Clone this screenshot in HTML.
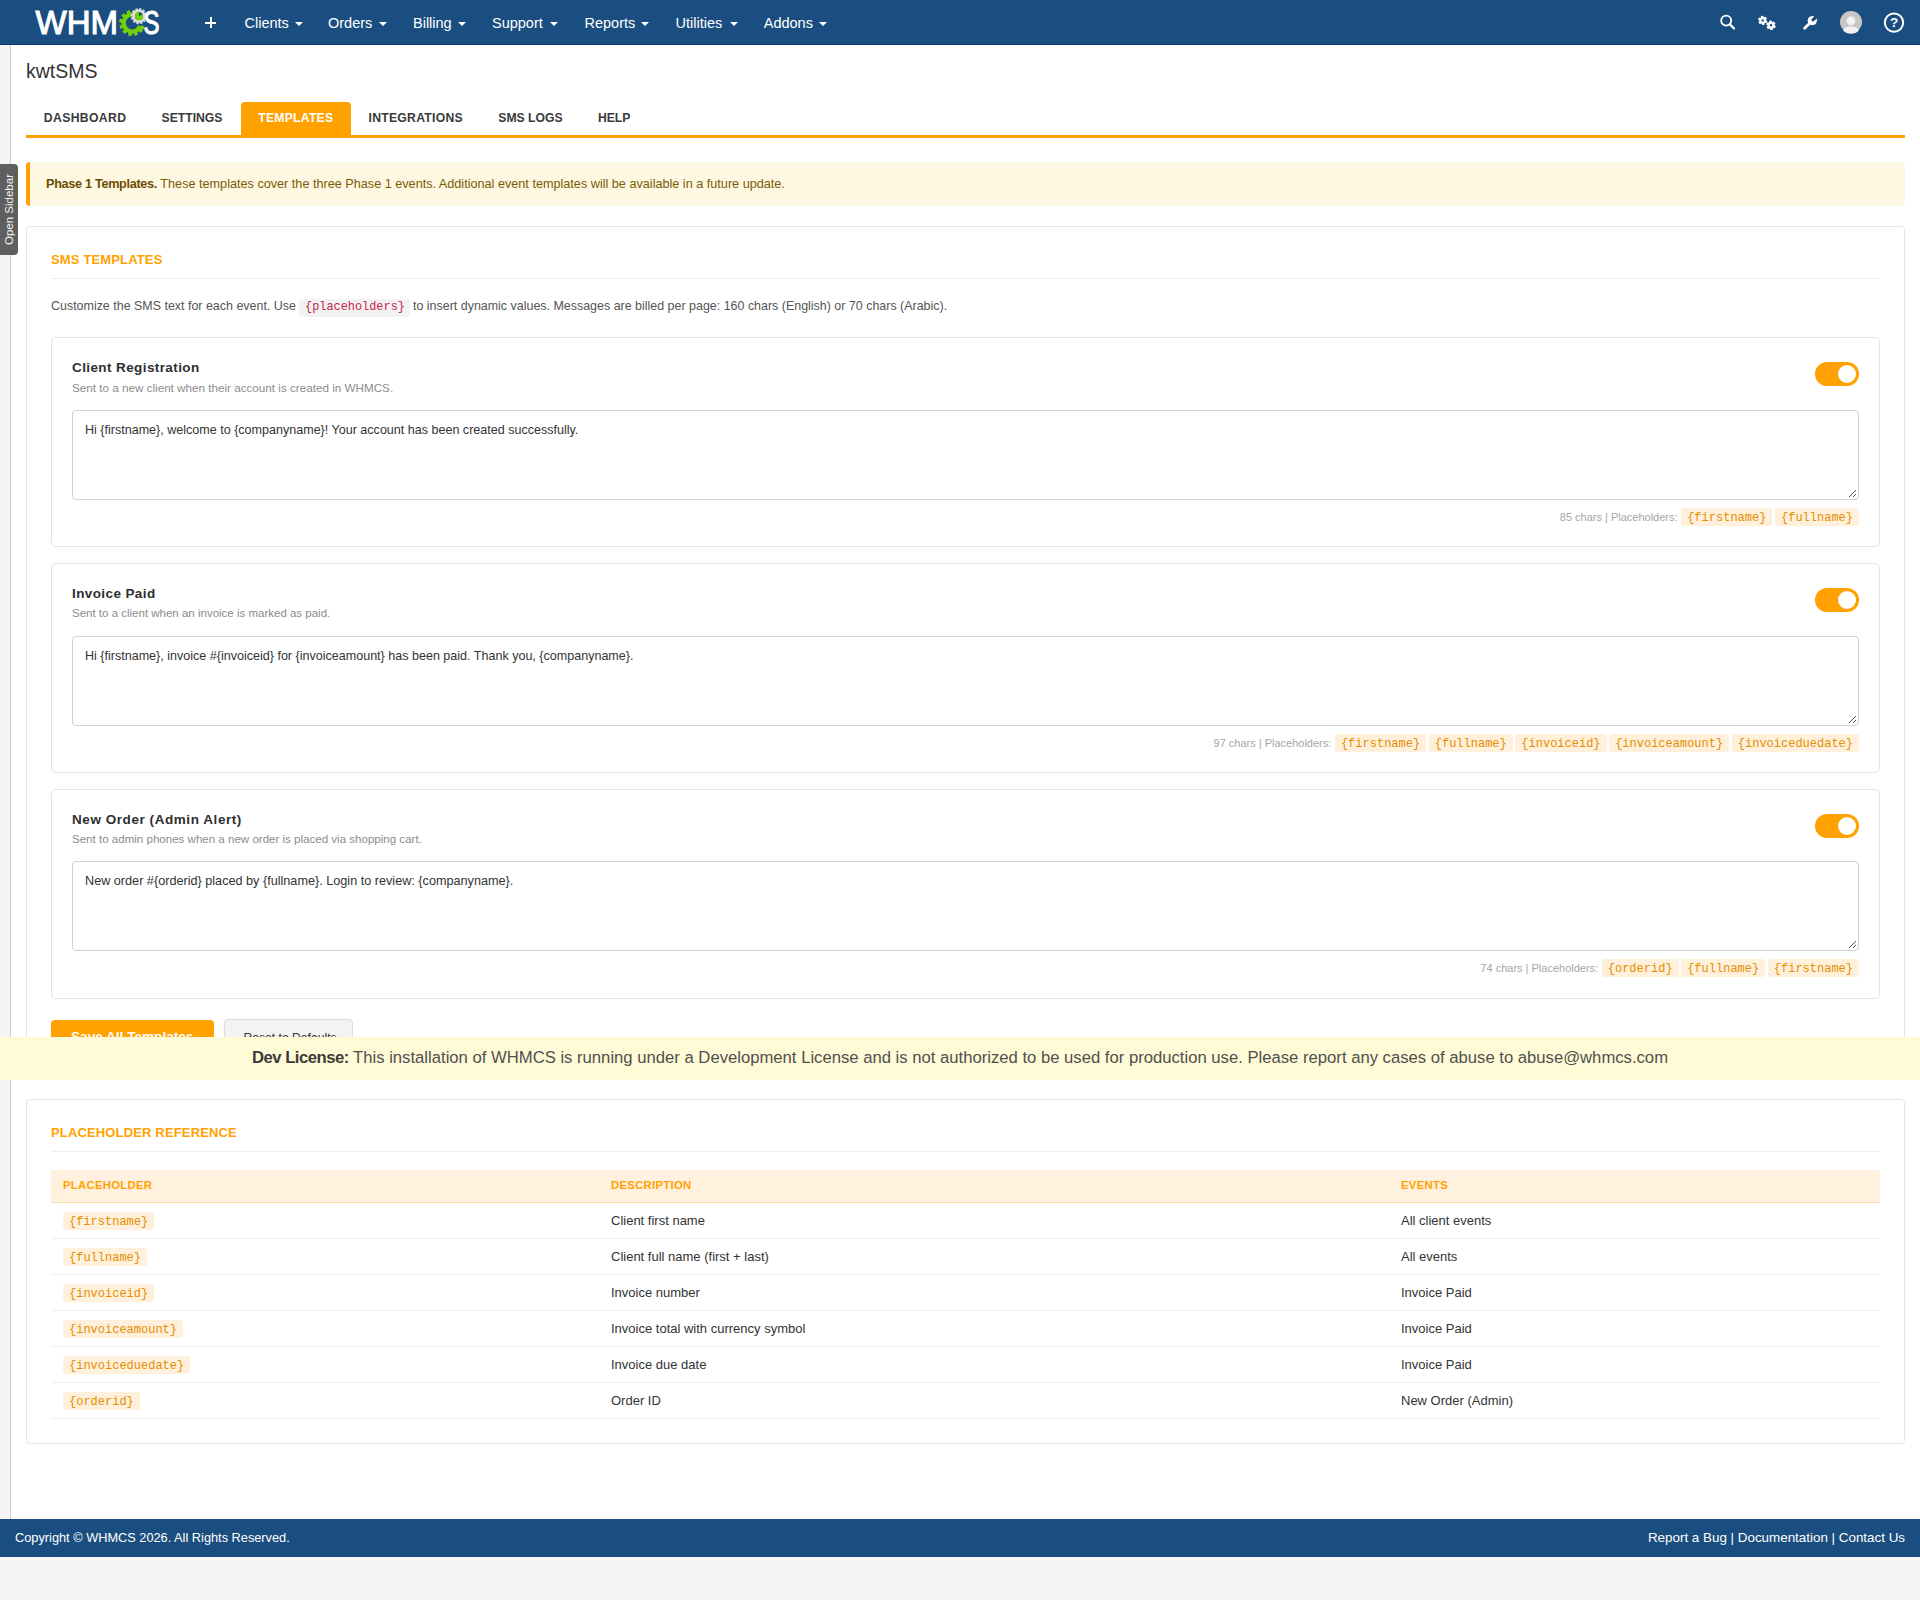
<!DOCTYPE html><html><head><meta charset="utf-8"><title>kwtSMS - WHMCS</title><style>
*{box-sizing:border-box;margin:0;padding:0}
html,body{width:1920px;height:1600px;overflow:hidden}
body{background:#f5f5f5;font-family:'Liberation Sans', sans-serif;position:relative}
.t{position:absolute;line-height:1;white-space:nowrap}
.r{position:absolute}
.chip{display:inline-block;font-family:'Liberation Mono', monospace;font-size:12px;line-height:20px;height:18px;padding:0 6px;background:#fff0db;color:#e58e00;border-radius:3px;vertical-align:top}
.crow{position:absolute;display:flex;justify-content:flex-end;align-items:flex-start;gap:2.6px;white-space:nowrap}
.crow .lab{font-size:11px;color:#a6a6a6;line-height:18px;margin-right:1px}
</style></head><body>
<div class="r" style="left:10px;top:45px;width:1910px;height:1474px;background:#fff;border-left:1px solid #cfcfcf"></div>
<div class="r" style="left:0px;top:0px;width:1920px;height:45px;background:#1b4e80;border-bottom:1px solid #0d3b6f"></div>
<svg class="r" style="left:0;top:0" width="200" height="45" viewBox="0 0 200 45">
<text x="35.5" y="34.4" font-family="Liberation Sans" font-size="33.5" fill="#fff" stroke="#fff" stroke-width="1.1" textLength="82.5" lengthAdjust="spacingAndGlyphs">WHM</text>
<path d="M142.60,23.00 L145.27,23.82 L144.62,27.18 L141.83,26.93 L141.21,28.20 L143.11,30.25 L140.86,32.83 L138.57,31.22 L137.40,32.01 L138.02,34.73 L134.79,35.84 L133.61,33.30 L132.20,33.40 L131.38,36.07 L128.02,35.42 L128.27,32.63 L127.00,32.01 L124.95,33.91 L122.37,31.66 L123.98,29.37 L123.19,28.20 L120.47,28.82 L119.36,25.59 L121.90,24.41 L121.80,23.00 L119.13,22.18 L119.78,18.82 L122.57,19.07 L123.19,17.80 L121.29,15.75 L123.54,13.17 L125.83,14.78 L127.00,13.99 L126.38,11.27 L129.61,10.16 L130.79,12.70 L132.20,12.60 L133.02,9.93 L136.38,10.58 L136.13,13.37 L137.40,13.99 L139.45,12.09 L142.03,14.34 L140.42,16.63 L141.21,17.80 L143.93,17.18 L145.04,20.41 L142.50,21.59Z M138.60,23.00 A6.4,6.4 0 1,0 125.80,23.00 A6.4,6.4 0 1,0 138.60,23.00Z" fill="#72cf0a" fill-rule="evenodd"/>
<path d="M132.2,23 L150,3 L153,26.6 L141,26.6 Z" fill="#1b4e80"/>
<circle cx="142" cy="27.6" r="2.1" fill="#72cf0a"/>
<path d="M145.60,16.20 L147.08,16.71 L146.67,18.82 L145.10,18.73 L144.70,19.55 L145.73,20.74 L144.32,22.35 L143.01,21.49 L142.25,22.00 L142.55,23.54 L140.52,24.24 L139.81,22.84 L138.90,22.90 L138.39,24.38 L136.28,23.97 L136.37,22.40 L135.55,22.00 L134.36,23.03 L132.75,21.62 L133.61,20.31 L133.10,19.55 L131.56,19.85 L130.86,17.82 L132.26,17.11 L132.20,16.20 L130.72,15.69 L131.13,13.58 L132.70,13.67 L133.10,12.85 L132.07,11.66 L133.48,10.05 L134.79,10.91 L135.55,10.40 L135.25,8.86 L137.28,8.16 L137.99,9.56 L138.90,9.50 L139.41,8.02 L141.52,8.43 L141.43,10.00 L142.25,10.40 L143.44,9.37 L145.05,10.78 L144.19,12.09 L144.70,12.85 L146.24,12.55 L146.94,14.58 L145.54,15.29Z M142.80,16.20 A3.9,3.9 0 1,0 135.00,16.20 A3.9,3.9 0 1,0 142.80,16.20Z" fill="#d9d9d9" fill-rule="evenodd"/>
<circle cx="139" cy="16.2" r="4.0" fill="#72cf0a"/><path d="M139,16.2 L139,12.2 A4,4 0 0,1 142.5,14.2 Z" fill="#1b4e80"/>
<text x="143.6" y="34.4" font-family="Liberation Sans" font-size="33.5" fill="#fff" stroke="#fff" stroke-width="1.1" textLength="16" lengthAdjust="spacingAndGlyphs">S</text>
</svg>
<div class="r" style="left:205px;top:21.5px;width:11px;height:2px;background:#fff"></div>
<div class="r" style="left:209.5px;top:17px;width:2px;height:11px;background:#fff"></div>
<div class="t" style="left:244.5px;top:16.13px;font-size:14.5px;color:#fff;">Clients</div>
<div class="r" style="left:294.5px;top:22px;width:0;height:0;border-left:4px solid transparent;border-right:4px solid transparent;border-top:4px solid #fff"></div>
<div class="t" style="left:328px;top:16.13px;font-size:14.5px;color:#fff;">Orders</div>
<div class="r" style="left:379px;top:22px;width:0;height:0;border-left:4px solid transparent;border-right:4px solid transparent;border-top:4px solid #fff"></div>
<div class="t" style="left:413px;top:16.13px;font-size:14.5px;color:#fff;">Billing</div>
<div class="r" style="left:458px;top:22px;width:0;height:0;border-left:4px solid transparent;border-right:4px solid transparent;border-top:4px solid #fff"></div>
<div class="t" style="left:492px;top:16.13px;font-size:14.5px;color:#fff;">Support</div>
<div class="r" style="left:550px;top:22px;width:0;height:0;border-left:4px solid transparent;border-right:4px solid transparent;border-top:4px solid #fff"></div>
<div class="t" style="left:584.5px;top:16.13px;font-size:14.5px;color:#fff;">Reports</div>
<div class="r" style="left:641px;top:22px;width:0;height:0;border-left:4px solid transparent;border-right:4px solid transparent;border-top:4px solid #fff"></div>
<div class="t" style="left:675.5px;top:16.13px;font-size:14.5px;color:#fff;">Utilities</div>
<div class="r" style="left:730px;top:22px;width:0;height:0;border-left:4px solid transparent;border-right:4px solid transparent;border-top:4px solid #fff"></div>
<div class="t" style="left:763.75px;top:16.13px;font-size:14.5px;color:#fff;">Addons</div>
<div class="r" style="left:819px;top:22px;width:0;height:0;border-left:4px solid transparent;border-right:4px solid transparent;border-top:4px solid #fff"></div>
<svg class="r" style="left:1700px;top:0" width="220" height="45" viewBox="1700 0 220 45">
<rect x="1708.5" y="5.5" width="37" height="32" fill="none" stroke="#1f4f84" stroke-width="1"/>
<circle cx="1726.2" cy="20.6" r="5" fill="none" stroke="#fff" stroke-width="1.9"/>
<line x1="1729.8" y1="24.2" x2="1734" y2="28.4" stroke="#fff" stroke-width="2.2" stroke-linecap="round"/>
<path d="M1766.20,20.40 L1767.36,20.99 L1766.44,23.24 L1765.20,22.85 L1764.45,23.43 L1764.52,24.73 L1762.11,25.06 L1761.83,23.79 L1760.95,23.43 L1759.86,24.14 L1758.37,22.22 L1759.33,21.34 L1759.20,20.40 L1758.04,19.81 L1758.96,17.56 L1760.20,17.95 L1760.95,17.37 L1760.88,16.07 L1763.29,15.74 L1763.57,17.01 L1764.45,17.37 L1765.54,16.66 L1767.03,18.58 L1766.07,19.46Z M1763.90,20.40 A1.2,1.2 0 1,0 1761.50,20.40 A1.2,1.2 0 1,0 1763.90,20.40Z" fill="#fff" fill-rule="evenodd"/>
<path d="M1774.70,25.30 L1775.86,25.91 L1774.90,28.26 L1773.64,27.89 L1772.85,28.50 L1772.90,29.82 L1770.39,30.16 L1770.08,28.88 L1769.15,28.50 L1768.04,29.20 L1766.48,27.20 L1767.44,26.30 L1767.30,25.30 L1766.14,24.69 L1767.10,22.34 L1768.36,22.71 L1769.15,22.10 L1769.10,20.78 L1771.61,20.44 L1771.92,21.72 L1772.85,22.10 L1773.96,21.40 L1775.52,23.40 L1774.56,24.30Z M1772.20,25.30 A1.2,1.2 0 1,0 1769.80,25.30 A1.2,1.2 0 1,0 1772.20,25.30Z" fill="#fff" fill-rule="evenodd"/>
<g transform="translate(1809.3,23.6) rotate(45)">
<rect x="-1.4" y="-2" width="2.8" height="10" rx="1.4" fill="#fff"/>
<path d="M-4,-6.5 A4.6,4.6 0 1,0 4,-6.5 L2,-9.2 L1.3,-3.8 L-1.3,-3.8 L-2,-9.2 Z" fill="#fff"/>
</g>
<circle cx="1851" cy="22" r="11" fill="#c6c6c6"/>
<circle cx="1851" cy="20.8" r="4.4" fill="#f2f2f2"/>
<path d="M1843.2,30.6 C1843.8,27.6 1846.5,26.4 1851,26.4 C1855.5,26.4 1858.2,27.6 1858.8,30.6 A11,11 0 0,1 1843.2,30.6Z" fill="#f2f2f2"/>
<circle cx="1894" cy="22.6" r="9.2" fill="none" stroke="#fff" stroke-width="2"/>
<text x="1894" y="27.3" text-anchor="middle" font-family="Liberation Sans" font-weight="bold" font-size="13.5" fill="#fff">?</text>
</svg>
<div class="r" style="left:0px;top:164px;width:18px;height:91px;background:#5f5f5f;border-radius:0 4px 4px 0"></div>
<div class="t" style="left:-27px;top:203px;width:72px;height:13px;font-size:11.5px;color:#f0f0f0;transform:rotate(-90deg);text-align:center;line-height:13px">Open Sidebar</div>
<div class="t" style="left:26px;top:62.49px;font-size:19.5px;color:#333;">kwtSMS</div>
<div class="r" style="left:26px;top:135px;width:1879px;height:3px;background:#ffa101"></div>
<div class="r" style="left:241px;top:102px;width:110px;height:33px;background:#ffa101;border-radius:4px 4px 0 0"></div>
<div class="t" style="left:43.8px;top:112.27px;font-size:12.2px;color:#3a3a3a;font-weight:bold;letter-spacing:0.37px;">DASHBOARD</div>
<div class="t" style="left:161.5px;top:112.27px;font-size:12.2px;color:#3a3a3a;font-weight:bold;letter-spacing:0px;">SETTINGS</div>
<div class="t" style="left:258.2px;top:112.27px;font-size:12.2px;color:#fff;font-weight:bold;letter-spacing:0.25px;">TEMPLATES</div>
<div class="t" style="left:368.5px;top:112.27px;font-size:12.2px;color:#3a3a3a;font-weight:bold;letter-spacing:0.27px;">INTEGRATIONS</div>
<div class="t" style="left:498.25px;top:112.27px;font-size:12.2px;color:#3a3a3a;font-weight:bold;letter-spacing:0px;">SMS LOGS</div>
<div class="t" style="left:597.9px;top:112.27px;font-size:12.2px;color:#3a3a3a;font-weight:bold;letter-spacing:0px;">HELP</div>
<div class="r" style="left:26px;top:162px;width:1879px;height:44px;background:#fef7e2;border-left:4px solid #ffa101;border-radius:4px"></div>
<div class="t" style="left:45.5px;top:176.56px;font-size:13.4px;color:#7a5c05;transform:scaleX(0.9448);transform-origin:0 0;"><b style="color:#6b4d00;letter-spacing:-0.32px">Phase 1 Templates.</b> These templates cover the three Phase 1 events. Additional event templates will be available in a future update.</div>
<div class="r" style="left:26px;top:226px;width:1879px;height:853px;background:#fff;border:1px solid #e6e6e6;border-radius:4px"></div>
<div class="t" style="left:51px;top:252.80px;font-size:13px;color:#ffa101;font-weight:bold;letter-spacing:0.15px;">SMS TEMPLATES</div>
<div class="r" style="left:51px;top:278px;width:1829px;height:1px;background:#eee"></div>
<div class="t" style="left:51px;top:299.34px;font-size:13.3px;color:#555;transform:scaleX(0.9361);transform-origin:0 0;">Customize the SMS text for each event. Use</div>
<div class="r" style="left:299px;top:299px;width:111px;height:18px;background:#f2f2f2;border-radius:3px"></div>
<div class="t" style="left:305px;top:302.38px;font-size:11.9px;color:#c7254e;font-family:'Liberation Mono', monospace;">{placeholders}</div>
<div class="t" style="left:413px;top:299.34px;font-size:13.3px;color:#555;transform:scaleX(0.9361);transform-origin:0 0;">to insert dynamic values. Messages are billed per page: 160 chars (English) or 70 chars (Arabic).</div>
<div class="r" style="left:51px;top:337px;width:1829px;height:210px;background:#fff;border:1px solid #e3e3e3;border-radius:5px"></div>
<div class="t" style="left:72px;top:360.57px;font-size:13.5px;color:#2f2f2f;font-weight:bold;letter-spacing:0.4px;">Client Registration</div>
<div class="t" style="left:72px;top:382.21px;font-size:11.68px;color:#8c8c8c;">Sent to a new client when their account is created in WHMCS.</div>
<div class="r" style="left:1815px;top:362px;width:44px;height:24px;background:#ffa101;border-radius:12px"></div>
<div class="r" style="left:1838px;top:365px;width:18px;height:18px;background:#fff;border-radius:50%"></div>
<div class="r" style="left:72px;top:410px;width:1787px;height:90px;background:#fff;border:1px solid #d2d2d2;border-radius:4px"></div>
<svg class="r" style="left:1848px;top:489px" width="9" height="9" viewBox="0 0 9 9"><line x1="1" y1="8" x2="8" y2="1" stroke="#555" stroke-width="1"/><line x1="5" y1="8" x2="8" y2="5" stroke="#555" stroke-width="1"/></svg>
<div class="t" style="left:85px;top:423.36px;font-size:13.4px;color:#333;transform:scaleX(0.9366);transform-origin:0 0;">Hi {firstname}, welcome to {companyname}! Your account has been created successfully.</div>
<div class="crow" style="right:61px;top:508px"><span class="lab">85 chars&nbsp;|&nbsp;Placeholders:</span><span class="chip">{firstname}</span><span class="chip">{fullname}</span></div>
<div class="r" style="left:51px;top:563px;width:1829px;height:210px;background:#fff;border:1px solid #e3e3e3;border-radius:5px"></div>
<div class="t" style="left:72px;top:586.57px;font-size:13.5px;color:#2f2f2f;font-weight:bold;letter-spacing:0.4px;">Invoice Paid</div>
<div class="t" style="left:72px;top:608.37px;font-size:11.5px;color:#8c8c8c;">Sent to a client when an invoice is marked as paid.</div>
<div class="r" style="left:1815px;top:588px;width:44px;height:24px;background:#ffa101;border-radius:12px"></div>
<div class="r" style="left:1838px;top:591px;width:18px;height:18px;background:#fff;border-radius:50%"></div>
<div class="r" style="left:72px;top:636px;width:1787px;height:90px;background:#fff;border:1px solid #d2d2d2;border-radius:4px"></div>
<svg class="r" style="left:1848px;top:715px" width="9" height="9" viewBox="0 0 9 9"><line x1="1" y1="8" x2="8" y2="1" stroke="#555" stroke-width="1"/><line x1="5" y1="8" x2="8" y2="5" stroke="#555" stroke-width="1"/></svg>
<div class="t" style="left:85px;top:649.36px;font-size:13.4px;color:#333;transform:scaleX(0.9366);transform-origin:0 0;">Hi {firstname}, invoice #{invoiceid} for {invoiceamount} has been paid. Thank you, {companyname}.</div>
<div class="crow" style="right:61px;top:734px"><span class="lab">97 chars&nbsp;|&nbsp;Placeholders:</span><span class="chip">{firstname}</span><span class="chip">{fullname}</span><span class="chip">{invoiceid}</span><span class="chip">{invoiceamount}</span><span class="chip">{invoiceduedate}</span></div>
<div class="r" style="left:51px;top:789px;width:1829px;height:210px;background:#fff;border:1px solid #e3e3e3;border-radius:5px"></div>
<div class="t" style="left:72px;top:812.57px;font-size:13.5px;color:#2f2f2f;font-weight:bold;letter-spacing:0.56px;">New Order (Admin Alert)</div>
<div class="t" style="left:72px;top:834.31px;font-size:11.56px;color:#8c8c8c;">Sent to admin phones when a new order is placed via shopping cart.</div>
<div class="r" style="left:1815px;top:814px;width:44px;height:24px;background:#ffa101;border-radius:12px"></div>
<div class="r" style="left:1838px;top:817px;width:18px;height:18px;background:#fff;border-radius:50%"></div>
<div class="r" style="left:72px;top:861px;width:1787px;height:90px;background:#fff;border:1px solid #d2d2d2;border-radius:4px"></div>
<svg class="r" style="left:1848px;top:940px" width="9" height="9" viewBox="0 0 9 9"><line x1="1" y1="8" x2="8" y2="1" stroke="#555" stroke-width="1"/><line x1="5" y1="8" x2="8" y2="5" stroke="#555" stroke-width="1"/></svg>
<div class="t" style="left:85px;top:874.36px;font-size:13.4px;color:#333;transform:scaleX(0.9448);transform-origin:0 0;">New order #{orderid} placed by {fullname}. Login to review: {companyname}.</div>
<div class="crow" style="right:61px;top:959px"><span class="lab">74 chars&nbsp;|&nbsp;Placeholders:</span><span class="chip">{orderid}</span><span class="chip">{fullname}</span><span class="chip">{firstname}</span></div>
<div class="r" style="left:51px;top:1020px;width:163px;height:34px;background:#ffa101;border-radius:4px"></div>
<div class="t" style="left:71px;top:1030.19px;font-size:13.6px;color:#fff;font-weight:bold;">Save All Templates</div>
<div class="r" style="left:224px;top:1019px;width:129px;height:36px;background:#f3f3f3;border:1px solid #dcdcdc;border-radius:4px"></div>
<div class="t" style="left:243.5px;top:1031.72px;font-size:12.15px;color:#333;">Reset to Defaults</div>
<div class="r" style="left:0px;top:1037px;width:1920px;height:43px;background:#fffbd6"></div>
<div class="t" style="left:0;width:1920px;text-align:center;top:1049.90px;font-size:16.66px;color:#505050"><b style="letter-spacing:-0.5px;color:#3a3a3a">Dev License:</b> This installation of WHMCS is running under a Development License and is not authorized to be used for production use. Please report any cases of abuse to abuse@whmcs.com</div>
<div class="r" style="left:26px;top:1099px;width:1879px;height:345px;background:#fff;border:1px solid #e6e6e6;border-radius:4px"></div>
<div class="t" style="left:51px;top:1126.00px;font-size:13px;color:#ffa101;font-weight:bold;letter-spacing:0.15px;">PLACEHOLDER REFERENCE</div>
<div class="r" style="left:51px;top:1151px;width:1829px;height:1px;background:#eee"></div>
<div class="r" style="left:51px;top:1170px;width:1829px;height:33px;background:#fff1de;border-bottom:1px solid #fcdcab"></div>
<div class="t" style="left:63px;top:1179.63px;font-size:11.3px;color:#ffa101;font-weight:bold;letter-spacing:0.3px;">PLACEHOLDER</div>
<div class="t" style="left:611px;top:1179.63px;font-size:11.3px;color:#ffa101;font-weight:bold;letter-spacing:0.3px;">DESCRIPTION</div>
<div class="t" style="left:1401px;top:1179.63px;font-size:11.3px;color:#ffa101;font-weight:bold;letter-spacing:0.3px;">EVENTS</div>
<div class="r" style="left:51px;top:1238px;width:1829px;height:1px;background:#efefef"></div>
<div class="r" style="left:63px;top:1212px"><span class="chip">{firstname}</span></div>
<div class="t" style="left:611px;top:1214.00px;font-size:13px;color:#333;">Client first name</div>
<div class="t" style="left:1401px;top:1214.00px;font-size:13px;color:#333;">All client events</div>
<div class="r" style="left:51px;top:1274px;width:1829px;height:1px;background:#efefef"></div>
<div class="r" style="left:63px;top:1248px"><span class="chip">{fullname}</span></div>
<div class="t" style="left:611px;top:1250.00px;font-size:13px;color:#333;">Client full name (first + last)</div>
<div class="t" style="left:1401px;top:1250.00px;font-size:13px;color:#333;">All events</div>
<div class="r" style="left:51px;top:1310px;width:1829px;height:1px;background:#efefef"></div>
<div class="r" style="left:63px;top:1284px"><span class="chip">{invoiceid}</span></div>
<div class="t" style="left:611px;top:1286.00px;font-size:13px;color:#333;">Invoice number</div>
<div class="t" style="left:1401px;top:1286.00px;font-size:13px;color:#333;">Invoice Paid</div>
<div class="r" style="left:51px;top:1346px;width:1829px;height:1px;background:#efefef"></div>
<div class="r" style="left:63px;top:1320px"><span class="chip">{invoiceamount}</span></div>
<div class="t" style="left:611px;top:1322.00px;font-size:13px;color:#333;">Invoice total with currency symbol</div>
<div class="t" style="left:1401px;top:1322.00px;font-size:13px;color:#333;">Invoice Paid</div>
<div class="r" style="left:51px;top:1382px;width:1829px;height:1px;background:#efefef"></div>
<div class="r" style="left:63px;top:1356px"><span class="chip">{invoiceduedate}</span></div>
<div class="t" style="left:611px;top:1358.00px;font-size:13px;color:#333;">Invoice due date</div>
<div class="t" style="left:1401px;top:1358.00px;font-size:13px;color:#333;">Invoice Paid</div>
<div class="r" style="left:51px;top:1418px;width:1829px;height:1px;background:#efefef"></div>
<div class="r" style="left:63px;top:1392px"><span class="chip">{orderid}</span></div>
<div class="t" style="left:611px;top:1394.00px;font-size:13px;color:#333;">Order ID</div>
<div class="t" style="left:1401px;top:1394.00px;font-size:13px;color:#333;">New Order (Admin)</div>
<div class="r" style="left:0px;top:1519px;width:1920px;height:38px;background:#1b4e80"></div>
<div class="t" style="left:15px;top:1531.68px;font-size:12.78px;color:#fff;">Copyright © WHMCS 2026. All Rights Reserved.</div>
<div class="t" style="right:15px;top:1531.16px;font-size:13.4px;color:#fff">Report a Bug | Documentation | Contact Us</div>
</body></html>
